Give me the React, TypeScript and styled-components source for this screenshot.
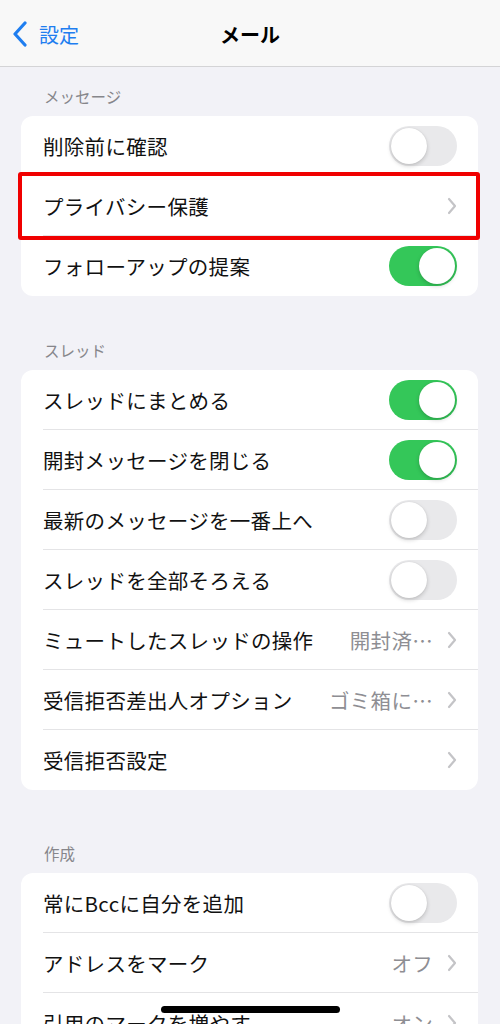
import styled, { createGlobalStyle } from "styled-components";

const GlobalStyle = createGlobalStyle`
  html, body {
    margin: 0;
    padding: 0;
    background: #f2f2f7;
    overflow: hidden;
  }
  body {
    font-family: "Noto Sans CJK JP", "Noto Sans", "Liberation Sans", sans-serif;
    -webkit-font-smoothing: antialiased;
  }
`;

const Page = styled.div`
  width: 500px;
  height: 1024px;
  background: #f2f2f7;
  overflow: hidden;
  position: relative;
`;

const NavBar = styled.div`
  height: 67px;
  background: #f8f8f8;
  border-bottom: 1px solid #d4d4d6;
  display: grid;
  grid-template-columns: 1fr auto 1fr;
  align-items: center;
  padding-top: 2px;
  box-sizing: border-box;
`;

const BackButton = styled.div`
  display: flex;
  align-items: center;
  gap: 11px;
  padding-left: 12px;
  color: #1f7ef0;
  font-size: 20px;
`;

const Title = styled.div`
  font-size: 20px;
  font-weight: 700;
  color: #000;
`;

const Section = styled.section<{ $top: number }>`
  margin-top: ${(p) => p.$top}px;
`;

const SectionHeader = styled.div`
  padding-left: 44px;
  height: 20px;
  line-height: 20px;
  font-size: 15.5px;
  color: #86868b;
  margin-bottom: 10px;
`;

const Card = styled.div`
  margin: 0 22px 0 21px;
  background: #fff;
  border-radius: 12px;
  overflow: hidden;
`;

const Row = styled.div<{ $last?: boolean }>`
  height: 60px;
  margin-left: 22px;
  padding-right: 21px;
  display: flex;
  align-items: center;
  box-sizing: border-box;
  border-bottom: ${(p) => (p.$last ? "none" : "1px solid #e4e4e6")};
`;

const Label = styled.div`
  flex: 1;
  font-size: 20.5px;
  color: #111;
  white-space: nowrap;
  letter-spacing: 0.3px;
`;

const Value = styled.div`
  font-size: 20.5px;
  color: #8e8e93;
  margin-right: 14px;
  white-space: nowrap;
  letter-spacing: 0.3px;
`;

const Switch = styled.div<{ $on?: boolean }>`
  width: 68px;
  height: 40px;
  border-radius: 20px;
  background: ${(p) => (p.$on ? "#34c759" : "#e9e9eb")};
  display: flex;
  align-items: center;
  justify-content: ${(p) => (p.$on ? "flex-end" : "flex-start")};
  padding: 2px;
  box-sizing: border-box;
`;

const Knob = styled.div`
  width: 36px;
  height: 36px;
  border-radius: 50%;
  background: #fff;
  box-shadow: 0 2px 4px rgba(0, 0, 0, 0.18), 0 0 1px rgba(0, 0, 0, 0.12);
`;

const Highlight = styled.div`
  position: absolute;
  left: 18px;
  top: 172px;
  width: 462px;
  height: 68px;
  border: 4px solid #f00000;
  border-radius: 3px;
  box-sizing: border-box;
  pointer-events: none;
`;

const HomeIndicator = styled.div`
  position: absolute;
  left: 161px;
  top: 1006px;
  width: 179px;
  height: 7px;
  border-radius: 4px;
  background: #000;
`;

const Chevron = () => (
  <svg width="10" height="18" viewBox="0 0 10 18">
    <path d="M2 2 L8 9 L2 16" fill="none" stroke="#c4c4c7" strokeWidth="2.2" strokeLinecap="round" strokeLinejoin="round" />
  </svg>
);

const BackChevron = () => (
  <svg width="16" height="26" viewBox="0 0 16 26">
    <path d="M13 2 L3 13 L13 24" fill="none" stroke="#1f7ef0" strokeWidth="3.2" strokeLinecap="round" strokeLinejoin="round" />
  </svg>
);

type Item = {
  label: string;
  toggle?: boolean;
  on?: boolean;
  value?: string;
};

const sections: { title: string; top: number; items: Item[] }[] = [
  {
    title: "メッセージ",
    top: 19,
    items: [
      { label: "削除前に確認", toggle: true, on: false },
      { label: "プライバシー保護" },
      { label: "フォローアップの提案", toggle: true, on: true },
    ],
  },
  {
    title: "スレッド",
    top: 44,
    items: [
      { label: "スレッドにまとめる", toggle: true, on: true },
      { label: "開封メッセージを閉じる", toggle: true, on: true },
      { label: "最新のメッセージを一番上へ", toggle: true, on: false },
      { label: "スレッドを全部そろえる", toggle: true, on: false },
      { label: "ミュートしたスレッドの操作", value: "開封済…" },
      { label: "受信拒否差出人オプション", value: "ゴミ箱に…" },
      { label: "受信拒否設定" },
    ],
  },
  {
    title: "作成",
    top: 53,
    items: [
      { label: "常にBccに自分を追加", toggle: true, on: false },
      { label: "アドレスをマーク", value: "オフ" },
      { label: "引用のマークを増やす", value: "オン" },
    ],
  },
];

export default function App() {
  return (
    <Page>
      <GlobalStyle />
      <NavBar>
        <BackButton>
          <BackChevron />
          <span>設定</span>
        </BackButton>
        <Title>メール</Title>
        <div />
      </NavBar>
      {sections.map((s) => (
        <Section key={s.title} $top={s.top}>
          <SectionHeader>{s.title}</SectionHeader>
          <Card>
            {s.items.map((it, i) => (
              <Row key={it.label} $last={i === s.items.length - 1}>
                <Label>{it.label}</Label>
                {it.value && <Value>{it.value}</Value>}
                {it.toggle ? (
                  <Switch $on={it.on}>
                    <Knob />
                  </Switch>
                ) : (
                  <Chevron />
                )}
              </Row>
            ))}
          </Card>
        </Section>
      ))}
      <Highlight />
      <HomeIndicator />
    </Page>
  );
}
